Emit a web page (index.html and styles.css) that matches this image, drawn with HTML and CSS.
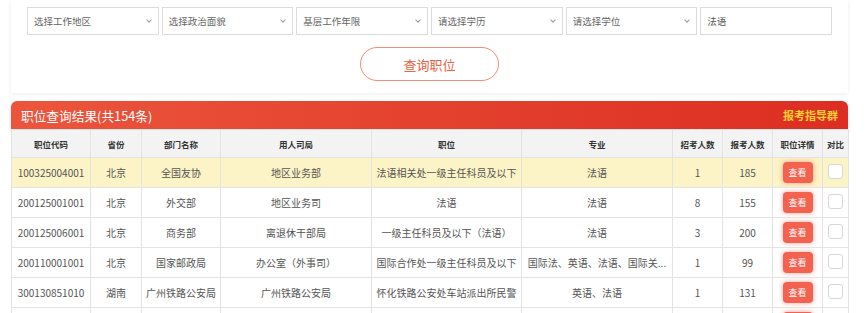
FILE: index.html
```html
<!DOCTYPE html>
<html lang="zh-CN">
<head>
    <meta charset="UTF-8">
    <title>职位查询</title>
    <link rel="stylesheet" href="styles.css">
</head>
<body>
    <div class="page">
        <div class="search-card">
            <div class="filters">
                <div class="select">选择工作地区<span class="chev"></span></div>
                <div class="select">选择政治面貌<span class="chev"></span></div>
                <div class="select">基层工作年限<span class="chev"></span></div>
                <div class="select">请选择学历<span class="chev"></span></div>
                <div class="select">请选择学位<span class="chev"></span></div>
                <div class="select text-input">法语</div>
            </div>
            <div class="search-row">
                <button class="search-btn">查询职位</button>
            </div>
        </div>

        <div class="result-bar">
            <span class="result-title">职位查询结果(共154条)</span>
            <span class="guide">报考指导群</span>
        </div>

        <table class="result-table">
            <colgroup>
                <col style="width:79px"><col style="width:51px"><col style="width:79px"><col style="width:151px">
                <col style="width:150px"><col style="width:151px"><col style="width:50px"><col style="width:50px">
                <col style="width:50px"><col style="width:26px">
            </colgroup>
            <thead>
                <tr>
                    <th>职位代码</th><th>省份</th><th>部门名称</th><th>用人司局</th><th>职位</th>
                    <th>专业</th><th>招考人数</th><th>报考人数</th><th>职位详情</th><th>对比</th>
                </tr>
            </thead>
            <tbody>
                <tr class="hit">
                    <td>100325004001</td><td>北京</td><td>全国友协</td><td>地区业务部</td><td>法语相关处一级主任科员及以下</td>
                    <td>法语</td><td>1</td><td>185</td><td><span class="view">查看</span></td><td><span class="check"></span></td>
                </tr>
                <tr>
                    <td>200125001001</td><td>北京</td><td>外交部</td><td>地区业务司</td><td>法语</td>
                    <td>法语</td><td>8</td><td>155</td><td><span class="view">查看</span></td><td><span class="check"></span></td>
                </tr>
                <tr>
                    <td>200125006001</td><td>北京</td><td>商务部</td><td>离退休干部局</td><td>一级主任科员及以下（法语）</td>
                    <td>法语</td><td>3</td><td>200</td><td><span class="view">查看</span></td><td><span class="check"></span></td>
                </tr>
                <tr>
                    <td>200110001001</td><td>北京</td><td>国家邮政局</td><td>办公室（外事司）</td><td>国际合作处一级主任科员及以下</td>
                    <td>国际法、英语、法语、国际关...</td><td>1</td><td>99</td><td><span class="view">查看</span></td><td><span class="check"></span></td>
                </tr>
                <tr>
                    <td>300130851010</td><td>湖南</td><td>广州铁路公安局</td><td>广州铁路公安局</td><td>怀化铁路公安处车站派出所民警</td>
                    <td>英语、法语</td><td>1</td><td>131</td><td><span class="view">查看</span></td><td><span class="check"></span></td>
                </tr>
                <tr>
                    <td>300130851011</td><td>湖南</td><td>广州铁路公安局</td><td>广州铁路公安局</td><td>长沙铁路公安处车站派出所民警</td>
                    <td>英语、法语</td><td>1</td><td>96</td><td><span class="view">查看</span></td><td><span class="check"></span></td>
                </tr>
            </tbody>
        </table>
    </div>
</body>
</html>
```

FILE: styles.css
```css
body {
    margin: 0;
    padding: 0;
    background: #fff;
    font-family: "Noto Sans CJK SC", "Noto Sans", sans-serif;
    color: #555;
}
.page {
    width: 837px;
    margin-left: 11px;
}
.search-card {
    background: #fff;
    padding: 7px 16px 12px;
    box-shadow: 0 1px 4px rgba(0, 0, 0, 0.08);
}
.filters {
    display: flex;
    gap: 3px;
}
.select {
    position: relative;
    box-sizing: border-box;
    width: 132px;
    height: 28px;
    border: 1px solid #dcdcdc;
    padding-left: 6px;
    font-size: 9.5px;
    line-height: 26px;
    color: #666;
}
.chev {
    position: absolute;
    right: 7px;
    top: 10px;
    width: 3px;
    height: 3px;
    border-right: 1px solid #999;
    border-bottom: 1px solid #999;
    transform: rotate(45deg);
}
.text-input {
    color: #555;
}
.search-row {
    display: flex;
    justify-content: center;
    margin-top: 12px;
}
.search-btn {
    width: 139px;
    height: 34px;
    border: 1px solid #ef8e72;
    border-radius: 17px;
    background: #fff;
    color: #e8643f;
    font-family: inherit;
    font-size: 13px;
}
.result-bar {
    display: flex;
    justify-content: space-between;
    align-items: center;
    height: 28px;
    margin-top: 8px;
    padding: 0 10px;
    border-radius: 6px 6px 0 0;
    background: linear-gradient(to right, #ec553c, #dc2e22);
    box-shadow: 0 2px 4px rgba(0, 0, 0, 0.12);
}
.result-title {
    color: #fff;
    font-size: 12.7px;
}
.guide {
    color: #ffd033;
    font-size: 11px;
    font-weight: bold;
}
.result-table {
    width: 837px;
    table-layout: fixed;
    border-collapse: collapse;
    font-size: 10px;
}
.result-table th,
.result-table td {
    border: 1px solid #e3e3e3;
    text-align: center;
    white-space: nowrap;
    overflow: hidden;
    padding: 0 2px;
}
.result-table th {
    height: 27px;
    background: #f3f3f3;
    color: #333;
    font-size: 8.5px;
}
.result-table td {
    height: 29px;
}
.result-table tr.hit td {
    background: #fcf3c6;
}
.view {
    display: inline-block;
    width: 30px;
    height: 21px;
    line-height: 21px;
    border-radius: 4px;
    background: #f3614f;
    color: #fff;
    font-size: 9px;
    box-shadow: 0 0 5px rgba(243, 97, 79, 0.6);
    vertical-align: middle;
}
.check {
    display: inline-block;
    box-sizing: border-box;
    width: 15px;
    height: 15px;
    border: 1px solid #d8d8d8;
    border-radius: 3px;
    background: #fff;
    vertical-align: middle;
    margin-top: -5px;
}
```
